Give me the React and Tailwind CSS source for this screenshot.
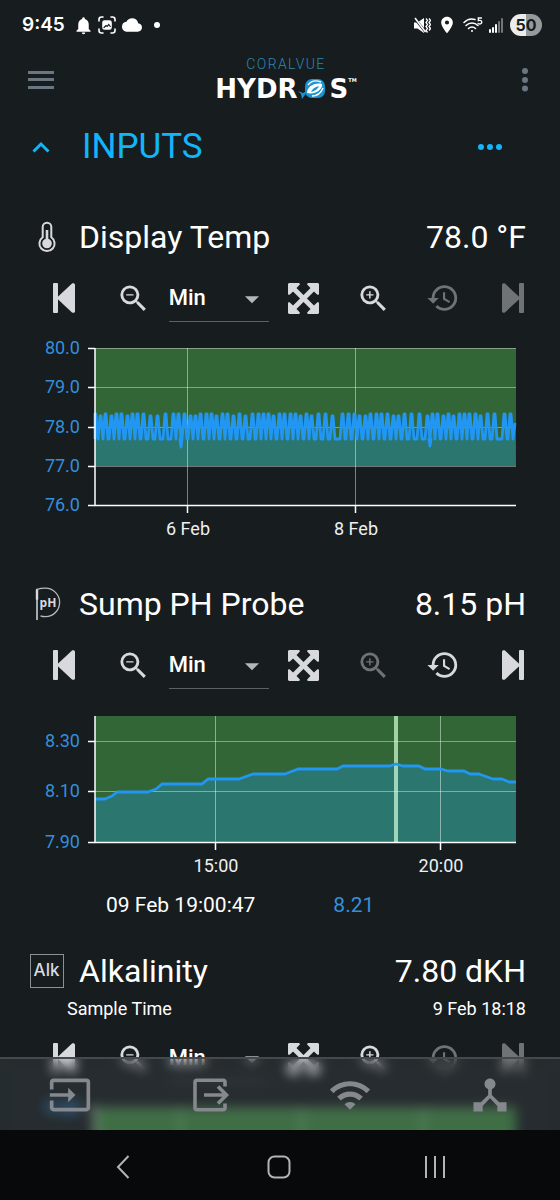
import { useState } from "react";
import {
    MdArrowDropDown,
    MdCloud,
    MdDeviceHub,
    MdHistory,
    MdInput,
    MdLocationOn,
    MdNotifications,
    MdWifi,
    MdZoomIn,
    MdZoomOut,
} from "react-icons/md";

const ZOOM_LEVELS = ["Min", "Hour", "Day", "Week"];

// Heater cycles of the display tank, x of every peak in chart units
const TEMP_PEAKS = [
    95, 100, 105, 111, 116, 121, 127, 132, 137, 143, 150, 157, 165, 173, 178,
    184, 190, 195, 200, 206, 211, 216, 222, 227, 233, 239, 245, 252, 258, 263,
    268, 273, 279, 284, 290, 295, 300, 306, 311, 318, 325, 332, 342, 348, 354,
    359, 365, 370, 376, 381, 387, 393, 398, 404, 411, 419, 427, 432, 437, 443,
    448, 453, 459, 464, 469, 475, 480, 487, 494, 504, 510,
];
const TEMP_DIPS = { 178: 113, 427: 112 };

const tempLine =
    TEMP_PEAKS.map((x, i) => {
        const top = i % 5 === 1 || i % 7 === 3 ? 82 : 80;
        const left = Math.max(x - 2, 95);
        const dip = TEMP_DIPS[x]
            ? ` L${x + 2} 105 L${x + 3} ${TEMP_DIPS[x]} L${x + 4} 105`
            : "";
        return `${left} 105 L${x} ${top} L${x + 1} ${top} L${x + 3} 105${dip}`;
    }).join(" L") + " L515 89";

const PH_LINE =
    "95 98 L105 98 L112 95 L117 91 L148 91 L156 88 L162 83 L202 83 L208 78 L239 78 L253 73 L285 73 L298 68 L337 68 L343 65 L390 65 L396 63 L403 65 L419 65 L425 68 L441 68 L448 70 L464 70 L470 73 L479 73 L493 78 L502 78 L509 81 L516 81";

const SENSORS = [
    {
        id: "temp",
        name: "Display Temp",
        value: "78.0 °F",
        icon: ThermometerIcon,
        live: true,
        chart: {
            height: 221,
            top: 14,
            bottom: 171,
            areaBottom: 132,
            line: tempLine,
            yTicks: [
                [14, "80.0"],
                [53, "79.0"],
                [93, "78.0"],
                [132, "77.0"],
                [171, "76.0"],
            ],
            xTicks: [
                [188, "6 Feb"],
                [356, "8 Feb"],
            ],
        },
    },
    {
        id: "ph",
        name: "Sump PH Probe",
        value: "8.15 pH",
        icon: PhIcon,
        zoomedIn: true,
        chart: {
            height: 189,
            top: 15,
            bottom: 141,
            areaBottom: 141,
            line: PH_LINE,
            cursor: 396,
            yTicks: [
                [40, "8.30"],
                [90, "8.10"],
                [141, "7.90"],
            ],
            xTicks: [
                [216, "15:00"],
                [441, "20:00"],
            ],
        },
        reading: { time: "09 Feb 19:00:47", value: "8.21" },
    },
    {
        id: "alk",
        name: "Alkalinity",
        value: "7.80 dKH",
        icon: AlkIcon,
        live: true,
        sampleTime: "9 Feb 18:18",
        chart: {
            height: 189,
            top: 14,
            bottom: 141,
            areaBottom: 141,
            line: "95 100 L516 96",
            yTicks: [[14, "9.00"]],
            xTicks: [
                [181, ""],
                [302, ""],
                [424, ""],
            ],
        },
    },
];

function ThermometerIcon() {
    return (
        <svg width="20" height="32" viewBox="0 0 20 32" fill="none">
            <path
                d="M5.7 16.2V6a4.3 4.3 0 0 1 8.6 0v10.2a7.6 7.6 0 1 1-8.6 0z"
                stroke="#d8d9df"
                strokeWidth="2"
            />
            <circle cx="10" cy="22.5" r="4.8" fill="#d8d9df" />
            <path d="M10 9v12" stroke="#d8d9df" strokeWidth="2.6" />
        </svg>
    );
}

function PhIcon() {
    return (
        <svg width="28" height="36" viewBox="0 0 28 36" fill="none" className="ml-1">
            <path
                d="M2 4v9"
                stroke="#d8d9df"
                strokeWidth="2.4"
                strokeLinecap="round"
            />
            <path d="M2 14v20" stroke="#b9babf" strokeWidth="1.8" />
            <path
                d="M2 3.400c2.800-.9 5.600-1.200 8.400-1.200a14 14 0 0 1 0 28.400c-1.800 0-3.400-.2-4.900-.8"
                stroke="#b9babf"
                strokeWidth="1.3"
            />
            <text
                x="13"
                y="21"
                textAnchor="middle"
                className="fill-[#d8d9df] font-['Open_Sans',sans-serif] text-[12px] font-bold"
            >
                pH
            </text>
        </svg>
    );
}

function AlkIcon() {
    return (
        <span className="flex size-[34px] items-center justify-center border border-[#8d9093] font-['Inter',sans-serif] text-[17px] font-medium text-[#d8d9df]">
            Alk
        </span>
    );
}

function StepIcon({ forward }) {
    return (
        <svg
            width="22"
            height="30"
            viewBox="0 0 22 30"
            fill="currentColor"
            className={forward ? "rotate-180" : ""}
        >
            <rect width="5" height="30" rx="1" />
            <path d="M4.600 14.100 19 .6c1-.9 3-.5 3 1.200v26.400c0 1.700-2 2.100-3 1.200L4.600 15.900a1.300 1.300 0 0 1 0-1.800z" />
        </svg>
    );
}

function ExpandIcon() {
    return (
        <svg width="31" height="31" viewBox="0 0 31 31" fill="currentColor">
            <path
                d="M5 5l21 21M26 5 5 26"
                stroke="currentColor"
                strokeWidth="4.800"
            />
            <path d="M1 0h10.200l.8 1.200-2 2.300-6.500 6.500-2.300 2L0 11.200V1zM30 0H19.800l-.8 1.200 2 2.300 6.500 6.500 2.300 2 1.200-.8V1zM1 31h10.200l.8-1.200-2-2.300L3.500 21l-2.300-2-1.200.8V30zM30 31H19.800l-.8-1.200 2-2.300 6.500-6.500 2.300-2 1.200.8V30z" />
        </svg>
    );
}

function OutputIcon() {
    return (
        <svg width="44" height="44" viewBox="0 0 44 44" fill="none" stroke="currentColor" strokeWidth="3.600">
            <path d="M37 13.500V9.300c0-1.200-.8-2-2-2H9c-1.200 0-2 .8-2 2v25.400c0 1.200.8 2 2 2h26c1.200 0 2-.8 2-2v-4.200" />
            <path d="M16 22h21M30 13.500l8.500 8.500-8.500 8.500" />
        </svg>
    );
}

function StatusBar() {
    return (
        <div className="flex h-[50px] items-center justify-between pr-[18px] pl-[22px] text-white">
            <div className="flex items-center gap-1">
                <span className="mr-1 font-['Inter',sans-serif] text-[19px] font-semibold">
                    9:45
                </span>
                <MdNotifications className="size-[21px]" />
                <svg width="18" height="18" viewBox="0 0 18 18" fill="none" stroke="currentColor" strokeWidth="1.600" strokeLinecap="round">
                    <path d="M1 5V3.500C1 2 2 1 3.500 1H5M13 1h1.500C16 1 17 2 17 3.500V5M17 13v1.500c0 1.500-1 2.500-2.500 2.500H13M5 17H3.500C2 17 1 16 1 14.500V13" />
                    <rect x="5" y="5" width="8" height="8" rx="1.500" fill="currentColor" />
                    <path d="M6 11.500l2-2 1.200 1 1.500-2 1.500 2" stroke="#171c1f" strokeWidth="1.200" />
                </svg>
                <MdCloud className="ml-0.5 size-5" />
                <span className="ml-2 size-[6px] rounded-full bg-white" />
            </div>
            <div className="flex items-center gap-[6px]">
                <svg width="17" height="17" viewBox="0 0 17 17">
                    <path d="M0 5.500h3.500L10 1v15l-6.500-4.500H0z" fill="currentColor" />
                    <path d="M0 .5 11.500 15" stroke="#171c1f" strokeWidth="2.600" />
                    <path d="M1 1l10.500 14" stroke="currentColor" strokeWidth="1.500" />
                    <path d="M12 1.500l1.500 2-1.500 2 1.500 2-1.500 2 1.500 2-1.500 2 1.500 2M15 1.500l1.500 2-1.500 2 1.500 2-1.500 2 1.500 2-1.500 2" fill="none" stroke="currentColor" strokeWidth="1.300" />
                </svg>
                <MdLocationOn className="size-5" />
                <svg width="20" height="18" viewBox="0 0 20 18" fill="none" stroke="currentColor" strokeWidth="1.500" strokeLinecap="round">
                    <path d="M1 6.500C4.500 2.800 8 2.200 12 3.500M3 9.500c3.500-3.500 8.500-3.500 12 0M5.500 12.500c2-2 5-2 7 0" />
                    <circle cx="9" cy="15" r="1" fill="currentColor" stroke="none" />
                    <path d="M18.500 2h-3.200v2.700c2.300-.7 3.600.1 3.500 1.700-.1 1.500-2.200 2.100-3.700 1" strokeWidth="1.300" />
                </svg>
                <svg width="15" height="16" viewBox="0 0 15 16" fill="currentColor">
                    <rect x="0" y="12" width="2" height="4" rx="1" />
                    <rect x="3" y="10" width="2" height="6" rx="1" />
                    <rect x="6" y="7" width="2" height="9" rx="1" />
                    <rect x="9" y="4" width="2" height="12" rx="1" opacity=".4" />
                    <rect x="12" y="1" width="2" height="15" rx="1" opacity=".4" />
                </svg>
                <span className="flex h-[22px] w-8 items-center justify-center rounded-full bg-linear-to-r from-[#ececec] from-50% to-[#979a9b] to-50% font-['Inter',sans-serif] text-base font-bold text-[#171c1f]">
                    50
                </span>
            </div>
        </div>
    );
}

function Logo() {
    return (
        <div className="flex flex-col items-center gap-[6px] pb-1">
            <span className="font-['Roboto',sans-serif] text-sm leading-4 font-light tracking-widest text-[#2a86b3]">
                CORALVUE
            </span>
            <div className="flex items-center font-['DejaVu_Sans',sans-serif] text-[26px] leading-[22px] font-bold text-white">
                HYDR
                <svg width="28" height="22" viewBox="0 0 28 22" className="mr-1">
                    <rect x="7" y="1" width="20" height="19" rx="7" fill="#1b93d0" />
                    <path d="M0 13l5 2 4-2c-1 3-3 5-5 8l-1-5z" fill="#1b93d0" />
                    <path d="M9 15c0-6 7-11 15-9 1 5-6 11-15 9z" fill="#fff" />
                    <path d="M13 14c1-3 4-5 8-6-1 3-4 5-8 6z" fill="#1b93d0" />
                    <path d="M10 7c3-4 8-5 13-3M14 18c5 0 9-3 11-8" fill="none" stroke="#fff" strokeWidth="1.400" />
                </svg>
                S
                <span className="self-start text-[5px] leading-none">TM</span>
            </div>
        </div>
    );
}

function Header() {
    return (
        <header className="flex h-[60px] items-center justify-between px-6 text-[#6a7783]">
            <button aria-label="Menu" className="flex w-[34px] justify-center">
                <svg width="26" height="20" viewBox="0 0 26 20" fill="currentColor">
                    <rect y="1" width="26" height="3" />
                    <rect y="8" width="26" height="3" />
                    <rect y="16" width="26" height="3" />
                </svg>
            </button>
            <Logo />
            <button aria-label="More" className="flex w-[22px] justify-center">
                <svg width="6" height="24" viewBox="0 0 6 24" fill="currentColor">
                    <circle cx="3" cy="3" r="3" />
                    <circle cx="3" cy="12" r="3" />
                    <circle cx="3" cy="20.500" r="3" />
                </svg>
            </button>
        </header>
    );
}

function Chart({ name, chart }) {
    const { height, top, bottom, areaBottom, line, cursor, yTicks, xTicks } =
        chart;

    return (
        <svg
            viewBox={`0 0 560 ${height}`}
            className="mt-3 block w-full font-['Roboto',sans-serif] text-[18px]"
            role="img"
            aria-label={`${name} history`}
        >
            <rect x="95" y={top} width="421" height={areaBottom - top} fill="#336637" />
            <path d={`M95 ${areaBottom} L${line} L516 ${areaBottom}z`} fill="#2c7670" />

            {/* grid */}
            {yTicks.map(([y]) => (
                <path key={y} d={`M95 ${y + 0.5}H516`} stroke="#fff" strokeOpacity=".4" />
            ))}
            {xTicks.map(([x]) => (
                <path key={x} d={`M${x - 0.5} ${top}V${bottom}`} stroke="#fff" strokeOpacity=".45" />
            ))}
            {cursor && (
                <rect x={cursor - 2} y={top} width="4" height={bottom - top} fill="#d2ffd6" fillOpacity=".7" />
            )}

            <path
                d={`M${line}`}
                fill="none"
                stroke="#2196f3"
                strokeWidth="2.800"
                strokeLinejoin="round"
            />

            {/* axes */}
            <path
                d={`M95 ${top}V${bottom + 0.5}H516`}
                fill="none"
                stroke="#fff"
                strokeWidth="1.500"
            />
            {yTicks.map(([y, label]) => (
                <g key={y}>
                    <path d={`M88 ${y + 0.5}H95`} stroke="#fff" strokeWidth="1.500" />
                    <text x="80" y={y + 6} textAnchor="end" fill="#338fdc">
                        {label}
                    </text>
                </g>
            ))}
            {xTicks.map(([x, label]) => (
                <g key={x}>
                    <path d={`M${x - 0.5} ${bottom}v8`} stroke="#fff" strokeWidth="1.500" />
                    <text x={x} y={bottom + 30} textAnchor="middle" fill="#eef0f1">
                        {label}
                    </text>
                </g>
            ))}
        </svg>
    );
}

function ToolButton({ label, disabled, children }) {
    return (
        <button
            aria-label={label}
            disabled={disabled}
            className="flex h-12 items-center justify-center text-[#d8d9df] disabled:text-[#707375]"
        >
            {children}
        </button>
    );
}

function ChartToolbar({ sensor }) {
    const [level, setLevel] = useState("Min");

    return (
        <div className="mt-3 grid grid-cols-[7fr_7fr_10fr_7fr_7fr_7fr_7fr] pr-3 pl-[29px]">
            <ToolButton label="Oldest">
                <StepIcon />
            </ToolButton>
            <ToolButton label="Zoom out">
                <MdZoomOut className="size-[35px]" />
            </ToolButton>
            <div className="relative border-b border-[#5c6163]">
                <select
                    aria-label={`${sensor.name} zoom level`}
                    value={level}
                    onChange={(e) => setLevel(e.target.value)}
                    className="h-full w-full appearance-none bg-transparent text-[22px] font-medium text-white"
                >
                    {ZOOM_LEVELS.map((item) => (
                        <option key={item}>{item}</option>
                    ))}
                </select>
                <MdArrowDropDown className="pointer-events-none absolute top-2 right-0 size-[34px] text-[#b4b6b9]" />
            </div>
            <ToolButton label="Fit">
                <ExpandIcon />
            </ToolButton>
            <ToolButton label="Zoom in" disabled={sensor.zoomedIn}>
                <MdZoomIn className="size-[35px]" />
            </ToolButton>
            <ToolButton label="Back to now" disabled={sensor.live}>
                <MdHistory className="size-[34px]" />
            </ToolButton>
            <ToolButton label="Newest" disabled={sensor.live}>
                <StepIcon forward />
            </ToolButton>
        </div>
    );
}

function Sensor({ sensor }) {
    const Icon = sensor.icon;

    return (
        <section>
            <div className="flex h-[50px] items-center pr-[34px] pl-[29px] text-[32px]">
                <span className="flex w-[35px] justify-center">
                    <Icon />
                </span>
                <h2 className="ml-[15px] flex-1">{sensor.name}</h2>
                <span>{sensor.value}</span>
            </div>
            {sensor.sampleTime && (
                <div className="flex justify-between pr-[34px] pl-[67px] text-[18px] leading-[26px]">
                    <span>Sample Time</span>
                    <span>{sensor.sampleTime}</span>
                </div>
            )}
            <ChartToolbar sensor={sensor} />
            <Chart name={sensor.name} chart={sensor.chart} />
            {sensor.reading && (
                <div className="flex h-8 items-center gap-[78px] pl-[106px] text-[21px]">
                    <span>{sensor.reading.time}</span>
                    <span className="text-[#338fdc]">
                        {sensor.reading.value}
                    </span>
                </div>
            )}
        </section>
    );
}

function BottomBar() {
    return (
        <div className="fixed inset-x-0 bottom-0 backdrop-blur-[6px]">
            <nav className="grid h-[73px] grid-cols-4 place-items-center border-t-2 border-[#45494c] bg-[#aebcc8]/10 text-[#85898d]">
                <a href="#inputs" aria-label="Inputs">
                    <MdInput className="size-11" />
                </a>
                <a href="#outputs" aria-label="Outputs">
                    <OutputIcon />
                </a>
                <a href="#wifi" aria-label="Wifi">
                    <MdWifi className="size-11" />
                </a>
                <a href="#collective" aria-label="Collective">
                    <MdDeviceHub className="size-11" />
                </a>
            </nav>
            <div className="grid h-[70px] grid-cols-3 place-items-center bg-[#08090b] pr-[47px] pl-[45px] pt-1 text-[#b3b4b5]">
                <button aria-label="Back">
                    <svg width="14" height="24" viewBox="0 0 14 24" fill="none" stroke="currentColor" strokeWidth="2">
                        <path d="M12.500 1 2 12l10.500 11" />
                    </svg>
                </button>
                <button aria-label="Home">
                    <svg width="24" height="24" viewBox="0 0 24 24" fill="none" stroke="currentColor" strokeWidth="2">
                        <rect x="1.500" y="1.500" width="21" height="21" rx="6" />
                    </svg>
                </button>
                <button aria-label="Recent apps">
                    <svg width="22" height="24" viewBox="0 0 22 24" stroke="currentColor" strokeWidth="2">
                        <path d="M2 1v22M11 1v22M20 1v22" />
                    </svg>
                </button>
            </div>
        </div>
    );
}

export default function App() {
    const [open, setOpen] = useState(true);

    return (
        <div className="h-screen overflow-hidden bg-[#171c1f] font-['Roboto',sans-serif] text-white">
            <StatusBar />
            <Header />
            <main>
                <div className="flex h-[74px] items-center justify-between pr-[58px] pl-8 text-[#12b5f9]">
                    <button
                        onClick={() => setOpen(!open)}
                        className="flex items-center gap-8 text-[35px]"
                    >
                        <svg width="18" height="12" viewBox="0 0 18 12" fill="none" stroke="currentColor" strokeWidth="3">
                            <path d="M1.500 10.500 9 3l7.500 7.500" />
                        </svg>
                        INPUTS
                    </button>
                    <button aria-label="Input options">
                        <svg width="24" height="6" viewBox="0 0 24 6" fill="currentColor">
                            <circle cx="3" cy="3" r="3" />
                            <circle cx="12" cy="3" r="3" />
                            <circle cx="21" cy="3" r="3" />
                        </svg>
                    </button>
                </div>
                {open && (
                    <div className="mt-7 flex flex-col gap-6">
                        {SENSORS.map((sensor) => (
                            <Sensor key={sensor.id} sensor={sensor} />
                        ))}
                    </div>
                )}
            </main>
            <BottomBar />
        </div>
    );
}
